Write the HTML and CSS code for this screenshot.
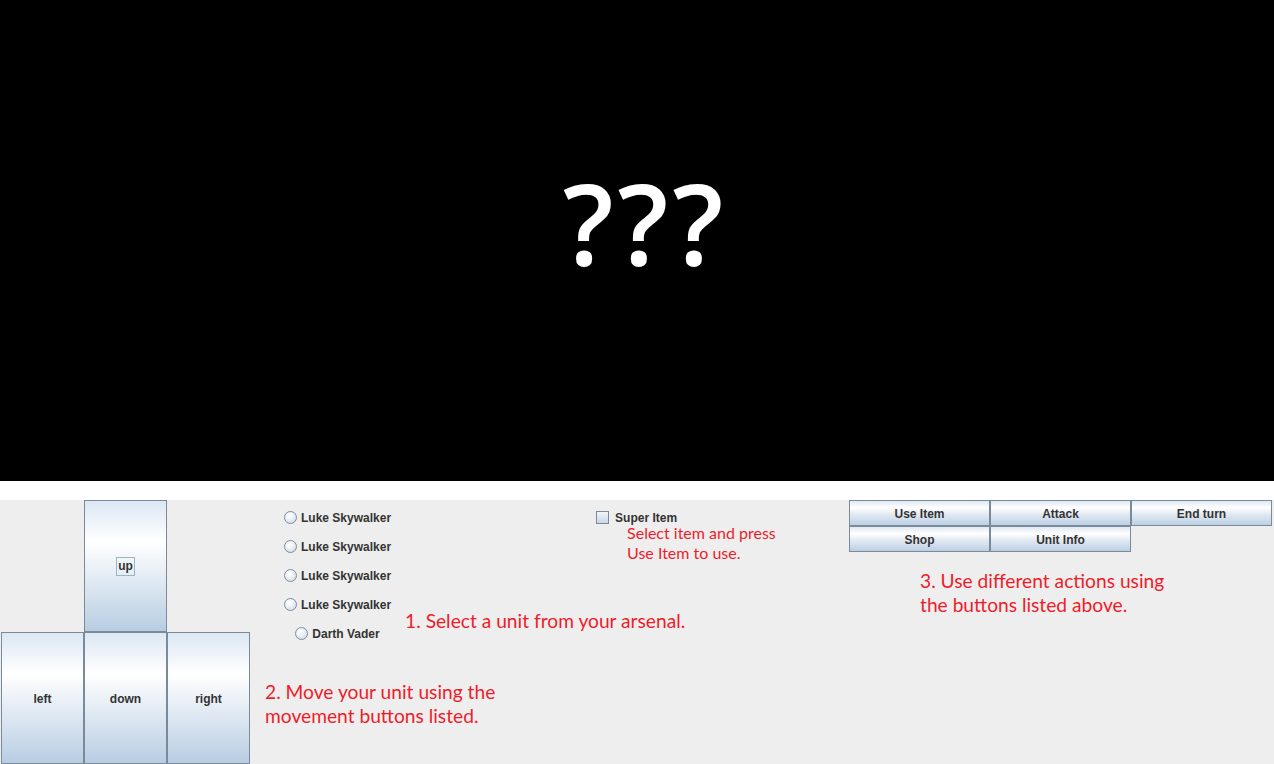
FILE: index.html
```html
<!DOCTYPE html>
<html>
<head>
<meta charset="utf-8">
<link rel="stylesheet" href="styles.css">
</head>
<body>
<div class="screen"><span class="mystery">???</span></div>
<div class="strip"></div>
<div class="panel">
  <div class="dpad">
    <div class="pad-cell empty"></div>
    <button class="pad-btn"><span class="focus">up</span></button>
    <div class="pad-cell empty"></div>
    <button class="pad-btn">left</button>
    <button class="pad-btn">down</button>
    <button class="pad-btn">right</button>
  </div>
  <div class="middle">
    <div class="row-a">
      <div class="units">
        <label class="unit"><span class="radio"></span>Luke Skywalker</label>
        <label class="unit"><span class="radio"></span>Luke Skywalker</label>
        <label class="unit"><span class="radio"></span>Luke Skywalker</label>
        <label class="unit"><span class="radio"></span>Luke Skywalker</label>
        <label class="unit"><span class="radio"></span>Darth Vader</label>
      </div>
      <div class="side">
        <div class="item-block">
          <label class="item"><span class="check"></span>Super Item</label>
          <div class="hint hint-item">Select item and press<br>Use Item to use.</div>
        </div>
        <div class="hint hint-1">1. Select a unit from your arsenal.</div>
      </div>
    </div>
    <div class="hint hint-2">2. Move your unit using the<br>movement buttons listed.</div>
  </div>
  <div class="right">
    <div class="actions">
      <button class="act-btn">Use Item</button>
      <button class="act-btn">Attack</button>
      <button class="act-btn">End turn</button>
      <button class="act-btn">Shop</button>
      <button class="act-btn">Unit Info</button>
    </div>
    <div class="hint hint-3">3. Use different actions using<br>the buttons listed above.</div>
  </div>
</div>
</body>
</html>
```
FILE: styles.css
```css
* { box-sizing: border-box; }
html, body { margin: 0; padding: 0; }
body {
  width: 1274px;
  height: 764px;
  overflow: hidden;
  background: #eeeeee;
  font-family: "Liberation Sans", Arial, sans-serif;
}
.screen {
  height: 481px;
  background: #000;
  display: flex;
  justify-content: center;
  align-items: center;
  padding-bottom: 36px;
  padding-left: 16px;
}
.mystery {
  color: #fff;
  font-family: "Open Sans", sans-serif;
  font-weight: 600;
  font-size: 112px;
  letter-spacing: 4px;
  line-height: 1;
}
.strip { height: 19px; background: #fff; }
.panel {
  height: 264px;
  display: flex;
  background: #eeeeee;
}
.dpad {
  margin-left: 1px;
  width: 249px;
  display: grid;
  grid-template-columns: repeat(3, 83px);
  grid-template-rows: 132px 132px;
}
.pad-btn, .act-btn {
  margin: 0;
  padding: 0;
  border: 1px solid #7a8a99;
  border-radius: 0;
  font-family: "Liberation Sans", Arial, sans-serif;
  font-weight: bold;
  font-size: 12px;
  color: #333333;
  display: flex;
  align-items: center;
  justify-content: center;
}
.pad-btn {
  background: linear-gradient(#dce7f3 0%, #ffffff 31%, #e4ecf4 58%, #b8cde3 100%);
  padding-top: 1px;
}
.focus {
  border: 1px solid #9db3ca;
  padding: 1px 1px 2px 1px;
  line-height: 14px;
}
.middle {
  width: 599px;
  display: flex;
  flex-direction: column;
}
.row-a {
  display: flex;
  align-items: flex-start;
  padding-top: 3px;
}
.units {
  margin-left: 34px;
  display: flex;
  flex-direction: column;
  align-items: center;
}
.unit, .item {
  height: 29px;
  display: flex;
  align-items: center;
  gap: 4px;
  font-weight: bold;
  font-size: 12px;
  color: #333333;
}
.radio {
  width: 13px;
  height: 13px;
  border-radius: 50%;
  border: 1px solid #7f8e9c;
  background: radial-gradient(circle at 40% 35%, #ffffff 0%, #eef2f7 40%, #c3d1df 100%);
}
.side {
  display: flex;
  flex-direction: column;
}
.item-block {
  margin-left: 205px;
  padding-top: 3px;
}
.item {
  height: 23px;
  gap: 6px;
}
.check {
  width: 13px;
  height: 13px;
  border: 1px solid #7a8a99;
  background: linear-gradient(#f2f5f9, #cbd7e4);
}
.hint {
  font-family: "Lato", "Open Sans", sans-serif;
  font-size: 19.2px;
  line-height: 24px;
  color: #ee1c2a;
}
.hint-item {
  margin-left: 31px;
  line-height: 20px;
  font-size: 16px;
  margin-top: -6px;
}
.hint-1 {
  margin-left: 14px;
  margin-top: 46px;
}
.hint-2 {
  margin-left: 15px;
  margin-top: 32px;
}
.right {
  display: flex;
  flex-direction: column;
}
.actions {
  display: grid;
  grid-template-columns: repeat(3, 141px);
  grid-template-rows: 26px 26px;
}
.act-btn {
  background: linear-gradient(#dfe8f3 0%, #ffffff 28%, #e2eaf3 55%, #bcd0e5 100%);
  padding-top: 1px;
}
.hint-3 {
  margin-left: 71px;
  margin-top: 17px;
}
```
